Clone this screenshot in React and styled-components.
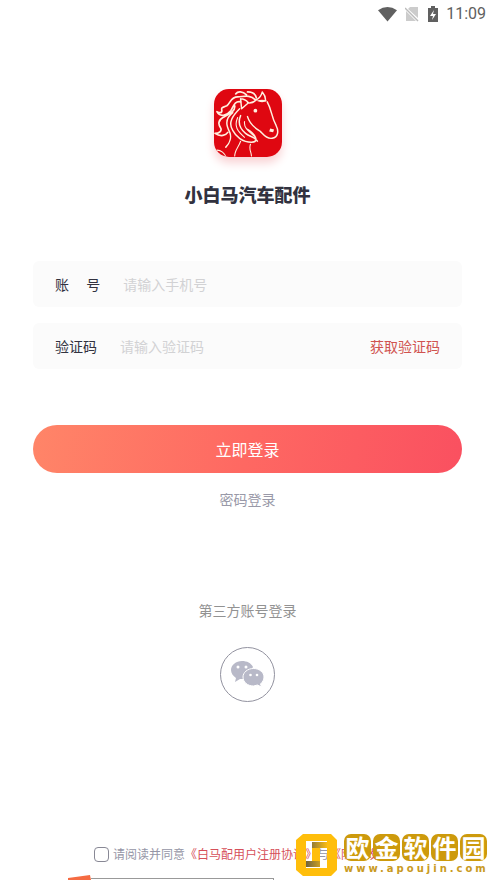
import React from "react";
import styled, { createGlobalStyle } from "styled-components";

const GlobalStyle = createGlobalStyle`
  *, *::before, *::after { box-sizing: border-box; }
  html, body, #root { margin: 0; height: 100%; }
  body {
    background: #fff;
    color: #32323f;
    font-family: "Noto Sans CJK SC", "Noto Sans", sans-serif;
    font-size: 14px;
    line-height: 20px;
  }
  button, input { font: inherit; color: inherit; border: 0; padding: 0; margin: 0; background: none; }
  button { cursor: pointer; }
`;

const Page = styled.div`
  position: relative;
  min-height: 100%;
  display: flex;
  flex-direction: column;
  overflow: hidden;
`;

const StatusBar = styled.header`
  display: flex;
  align-items: center;
  justify-content: flex-end;
  gap: 7px;
  height: 28px;
  padding-right: 9px;
  color: #606060;
  font-family: Roboto, sans-serif;
  font-size: 16px;
`;

const StatusIcons = styled.div`
  display: flex;
  align-items: center;
  gap: 8px;
`;

const Brand = styled.div`
  display: flex;
  flex-direction: column;
  align-items: center;
  gap: 24px;
  padding-top: 61px;
`;

const Logo = styled.svg`
  display: block;
  width: 68px;
  height: 68px;
  border-radius: 15px;
  box-shadow: 0 6px 10px #f9d3d5;
`;

const Title = styled.h1`
  margin: 0;
  font-size: 18px;
  line-height: 26px;
  font-weight: 900;
`;

const Form = styled.form`
  display: flex;
  flex-direction: column;
  gap: 16px;
  padding: 54px 33px 0;
`;

const Field = styled.div`
  display: flex;
  align-items: center;
  gap: 23px;
  height: 46px;
  padding: 0 22px;
  border-radius: 6px;
  background: #fbfbfb;
`;

const Label = styled.label`
  white-space: pre;
`;

const TextInput = styled.input`
  flex: 1;
  min-width: 0;
  outline: 0;
  &::placeholder { color: #d2d2d4; opacity: 1; }
`;

const CodeButton = styled.button`
  color: #d0534f;
`;

const LoginButton = styled.button`
  height: 48px;
  margin-top: 40px;
  border-radius: 25px;
  background: linear-gradient(100deg, #ff8568 0%, #fe6862 50%, #fa5060 100%);
  color: #fff;
  font-size: 16px;
`;

const PasswordLogin = styled.button`
  align-self: center;
  color: #9999a8;
`;

const ThirdParty = styled.section`
  display: flex;
  flex-direction: column;
  align-items: center;
  gap: 27px;
  padding-top: 91px;
  color: #929292;
`;

const WechatButton = styled.button`
  display: grid;
  place-items: center;
  width: 55px;
  height: 55px;
  border: 1px solid #92929f;
  border-radius: 50%;
`;

const Footer = styled.footer`
  margin-top: auto;
  padding-top: 24px;
`;

const Agreement = styled.div`
  display: flex;
  justify-content: center;
  align-items: center;
  gap: 4px;
  color: #9595a6;
  font-size: 12px;
  white-space: nowrap;
`;

const CheckBox = styled.input`
  appearance: none;
  width: 15px;
  height: 15px;
  border: 1px solid #888895;
  border-radius: 4px;
  &:checked { background: #d6505a; }
`;

const AgreementLink = styled.a`
  color: #d6505a;
  text-decoration: none;
`;

const Peek = styled.div`
  display: flex;
  align-items: flex-end;
  height: 16px;
  margin-left: 68px;
`;

const PeekEdge = styled.div`
  width: 183px;
  height: 2px;
  border: solid #999;
  border-width: 1px 1px 0 0;
`;

const Watermark = styled.div`
  position: absolute;
  right: 8px;
  bottom: 4px;
  display: flex;
  align-items: center;
  gap: 7px;
  pointer-events: none;
`;

const WatermarkText = styled.div`
  display: flex;
  flex-direction: column;
  gap: 1px;
`;

const Seals = styled.div`
  display: flex;
  gap: 2px;
`;

const Seal = styled.span`
  width: 27px;
  height: 27px;
  border-radius: 7px;
  background: #cd9a0c;
  color: #fff;
  font-size: 24px;
  line-height: 26px;
  font-weight: 700;
  text-align: center;
`;

const Site = styled.span`
  color: #c99a22;
  font-family: "DejaVu Sans", sans-serif;
  font-size: 10px;
  font-weight: 700;
  line-height: 14px;
  letter-spacing: 3px;
  width: 0;
  white-space: nowrap;
`;

function Horse() {
  return (
    <Logo viewBox="0 0 69 69" role="img" aria-label="小白马">
      <rect width="69" height="69" fill="#df0711" />
      <g fill="none" stroke="#fff0df" strokeLinecap="round" strokeLinejoin="round">
        <path strokeWidth="1.5" d="M27 10 28 20 35 14Q31 10 27 10M43 11Q48 8 49 3Q53 8 52 12M34 14Q39 15 43 11M54 13C59 22 58 28 63 37C66 43 65 49 59 50C53 51 50 46 47 43C42 40 36 35 34 28" />
        <path strokeWidth="1.7" d="M42 11C36 5 30 8 24 8C17 8 17 14 13 17C9 19 7 18 8 22C8 25 5 24 3 23C6 29 13 27 17 22C20 18 20 12 27 13M22 5C24 2 29 2 33 6M34 3C38 3 42 4 43 9M21 17C22 23 14 26 9 29C4 32 4 36 7 40C8 43 5 45 1 45C7 49 12 47 14 44" />
        <path strokeWidth="1.5" d="M19 24C10 31 13 38 16 44C18 49 16 55 12 59M26 20C19 27 14 34 19 42C22 48 29 54 38 54C47 54 41 45 34 41M27 27C24 34 26 40 32 45C37 49 41 48 44 53" />
        <path strokeWidth="1.1" d="M24 29C20 38 24 43 31 49M31 33C30 40 36 43 41 48M27 53C25 59 21 62 21 68M37 56C35 61 38 64 38 68M3 62C7 62 11 65 12 69" />
      </g>
      <g fill="#fff0df">
        <circle cx="42" cy="22" r="1.9" />
        <path d="m57 40 4 1-1 3-4-1ZM43 12q6-2 11 0-5 3-11 0Z" />
      </g>
    </Logo>
  );
}

function Wechat() {
  return (
    <svg width="33" height="27" viewBox="0 0 33 27" aria-hidden="true">
      <path fill="#b8b9c8" d="M11 0C5 0 0 4 0 9c0 3 2 6 5 8l-1 4 5-3 5 0L22 6C20 2 16 0 11 0Z" />
      <path fill="#b8b9c8" stroke="#fff" d="M22.500 7.500c-6 0-10.500 4-10.500 8.500 0 5 4.500 9 10.500 9l4-1 4 2-1-3c2-2 3.500-4 3.500-7 0-4.500-4.500-8.500-10.500-8.500Z" />
      <circle cx="7" cy="6" r="1.500" fill="#fff" />
      <circle cx="15" cy="6" r="1.500" fill="#fff" />
      <circle cx="19.500" cy="14" r="1.300" fill="#fff" />
      <circle cx="26" cy="14" r="1.300" fill="#fff" />
    </svg>
  );
}

function WatermarkLogo() {
  return (
    <svg width="41" height="42" viewBox="0 0 41 42" aria-hidden="true">
      <defs>
        <linearGradient id="fold">
          <stop stopColor="#6e6440" />
          <stop offset="1" stopColor="#f8bb12" />
        </linearGradient>
      </defs>
      <path fill="#ffbe0b" fillRule="evenodd" d="M7 0H35L41 6V36L35 42H7L0 36V6ZM10 7V34H31V7Z" />
      <path fill="#ffbe0b" d="M16 8H24V33H16Z" />
      <path fill="url(#fold)" d="M16 8H31V14H16ZM10 27H24V33H10Z" />
      <path fill="#fff" d="M10 7H31V8H10ZM10 33H31V34H10Z" />
    </svg>
  );
}

export default function App() {
  return (
    <>
      <GlobalStyle />
      <Page>
        <StatusBar>
          <StatusIcons>
            <svg width="19" height="16" viewBox="0 0 20 16" aria-hidden="true">
              <path fill="#606060" d="M0 4Q10-3 20 4L10 16Z" />
            </svg>
            <svg width="14" height="16" viewBox="0 0 14 16" aria-hidden="true">
              <path fill="#ccc" d="M5 1H13V12L3 3ZM1 5 11 15H1Z" />
              <path stroke="#bbb" strokeWidth="1.5" d="m0 2 13 13" />
            </svg>
            <svg width="12" height="16" viewBox="0 0 12 16" aria-hidden="true">
              <path fill="#606060" d="M1 2H4V0H8V2H11V16H1Z" />
              <path fill="#fff" d="M7 4 3 10H6L5 14 9 8H6Z" />
            </svg>
          </StatusIcons>
          <span>11:09</span>
        </StatusBar>
        <Brand>
          <Horse />
          <Title>小白马汽车配件</Title>
        </Brand>
        <Form onSubmit={(e) => e.preventDefault()}>
          <Field>
            <Label htmlFor="phone">{"账\u2003 号"}</Label>
            <TextInput id="phone" type="tel" placeholder="请输入手机号" />
          </Field>
          <Field>
            <Label htmlFor="code">验证码</Label>
            <TextInput id="code" placeholder="请输入验证码" />
            <CodeButton type="button">获取验证码</CodeButton>
          </Field>
          <LoginButton type="submit">立即登录</LoginButton>
          <PasswordLogin type="button">密码登录</PasswordLogin>
        </Form>
        <ThirdParty>
          <span>第三方账号登录</span>
          <WechatButton type="button" aria-label="微信登录"><Wechat /></WechatButton>
        </ThirdParty>
        <Footer>
          <Agreement>
            <CheckBox type="checkbox" id="agree" />
            <span>
              <label htmlFor="agree">请阅读并同意</label>
              <AgreementLink href="#register">《白马配用户注册协议》</AgreementLink>
              与
              <AgreementLink href="#privacy">《隐私政策》</AgreementLink>
            </span>
          </Agreement>
          <Peek>
            <svg width="23" height="5" viewBox="0 0 23 5" aria-hidden="true">
              <path fill="#f56b42" d="M0 3 22 0 23 5H0Z" />
            </svg>
            <PeekEdge />
          </Peek>
        </Footer>
        <Watermark>
          <WatermarkLogo />
          <WatermarkText>
            <Seals>{[..."欧金软件园"].map((c) => <Seal key={c}>{c}</Seal>)}</Seals>
            <Site>www.apoujin.com</Site>
          </WatermarkText>
        </Watermark>
      </Page>
    </>
  );
}
